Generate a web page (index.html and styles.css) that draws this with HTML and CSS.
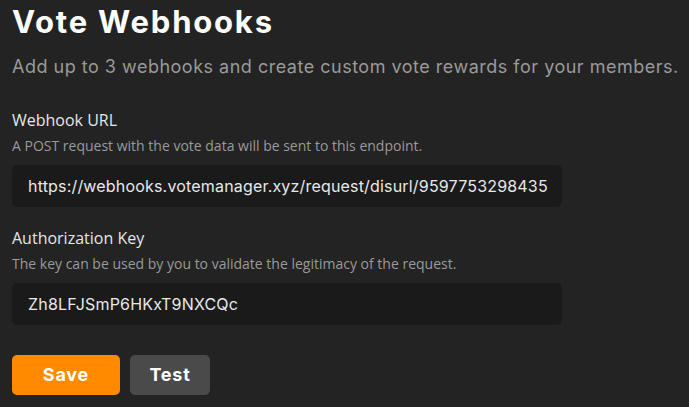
FILE: index.html
```html
<!DOCTYPE html>
<html>
<head>
<meta charset="utf-8">
<link rel="stylesheet" href="styles.css">
</head>
<body>
<main class="page">
  <h1 class="title">Vote Webhooks</h1>
  <p class="subtitle">Add up to 3 webhooks and create custom vote rewards for your members.</p>
  <section class="field">
    <div class="label">Webhook URL</div>
    <div class="desc">A POST request with the vote data will be sent to this endpoint.</div>
    <div class="input">https://webhooks.votemanager.xyz/request/disurl/9597753298435</div>
  </section>
  <section class="field">
    <div class="label">Authorization Key</div>
    <div class="desc">The key can be used by you to validate the legitimacy of the request.</div>
    <div class="input">Zh8LFJSmP6HKxT9NXCQc</div>
  </section>
  <div class="actions">
    <button class="btn btn-save">Save</button>
    <button class="btn btn-test">Test</button>
  </div>
</main>
</body>
</html>
```
FILE: styles.css
```css
html, body {
  margin: 0;
  padding: 0;
  background: #232323;
  height: 100%;
  overflow: hidden;
}
.page {
  padding: 0 12px;
  display: flex;
  flex-direction: column;
}
.title {
  margin: 0;
  font-family: Inter, sans-serif;
  font-weight: 700;
  font-size: 31px;
  line-height: 44px;
  color: #ffffff;
  letter-spacing: 1.8px;
}
.subtitle {
  margin: 11px 0 0;
  font-family: Inter, sans-serif;
  font-weight: 400;
  font-size: 18px;
  line-height: 24px;
  color: #9a9a9a;
  letter-spacing: 0.5px;
  white-space: nowrap;
}
.field {
  display: flex;
  flex-direction: column;
  margin-top: 30px;
}
.field + .field {
  margin-top: 20px;
}
.label {
  font-family: "Open Sans", sans-serif;
  font-size: 16px;
  line-height: 22px;
  color: #e6e6e6;
}
.desc {
  margin-top: 5px;
  font-family: "Open Sans", sans-serif;
  font-size: 14px;
  line-height: 19px;
  color: #9a9a9a;
}
.input {
  margin-top: 10px;
  width: 550px;
  height: 42px;
  box-sizing: border-box;
  padding: 0 16px;
  display: flex;
  align-items: center;
  background: #1a1a1a;
  border-radius: 5px;
  font-family: Inter, sans-serif;
  font-size: 16px;
  color: #e8e8e8;
  letter-spacing: 0.18px;
  white-space: nowrap;
  overflow: hidden;
}
.actions {
  display: flex;
  gap: 10px;
  margin-top: 30px;
}
.btn {
  border: none;
  height: 40px;
  border-radius: 5px;
  font-family: Inter, sans-serif;
  font-weight: 700;
  font-size: 18px;
  line-height: 40px;
  color: #ffffff;
  letter-spacing: 0.8px;
  padding: 0 0 2px;
}
.btn-save {
  width: 108px;
  background: #ff8a00;
}
.btn-test {
  width: 80px;
  background: #4a4a4a;
}
```
